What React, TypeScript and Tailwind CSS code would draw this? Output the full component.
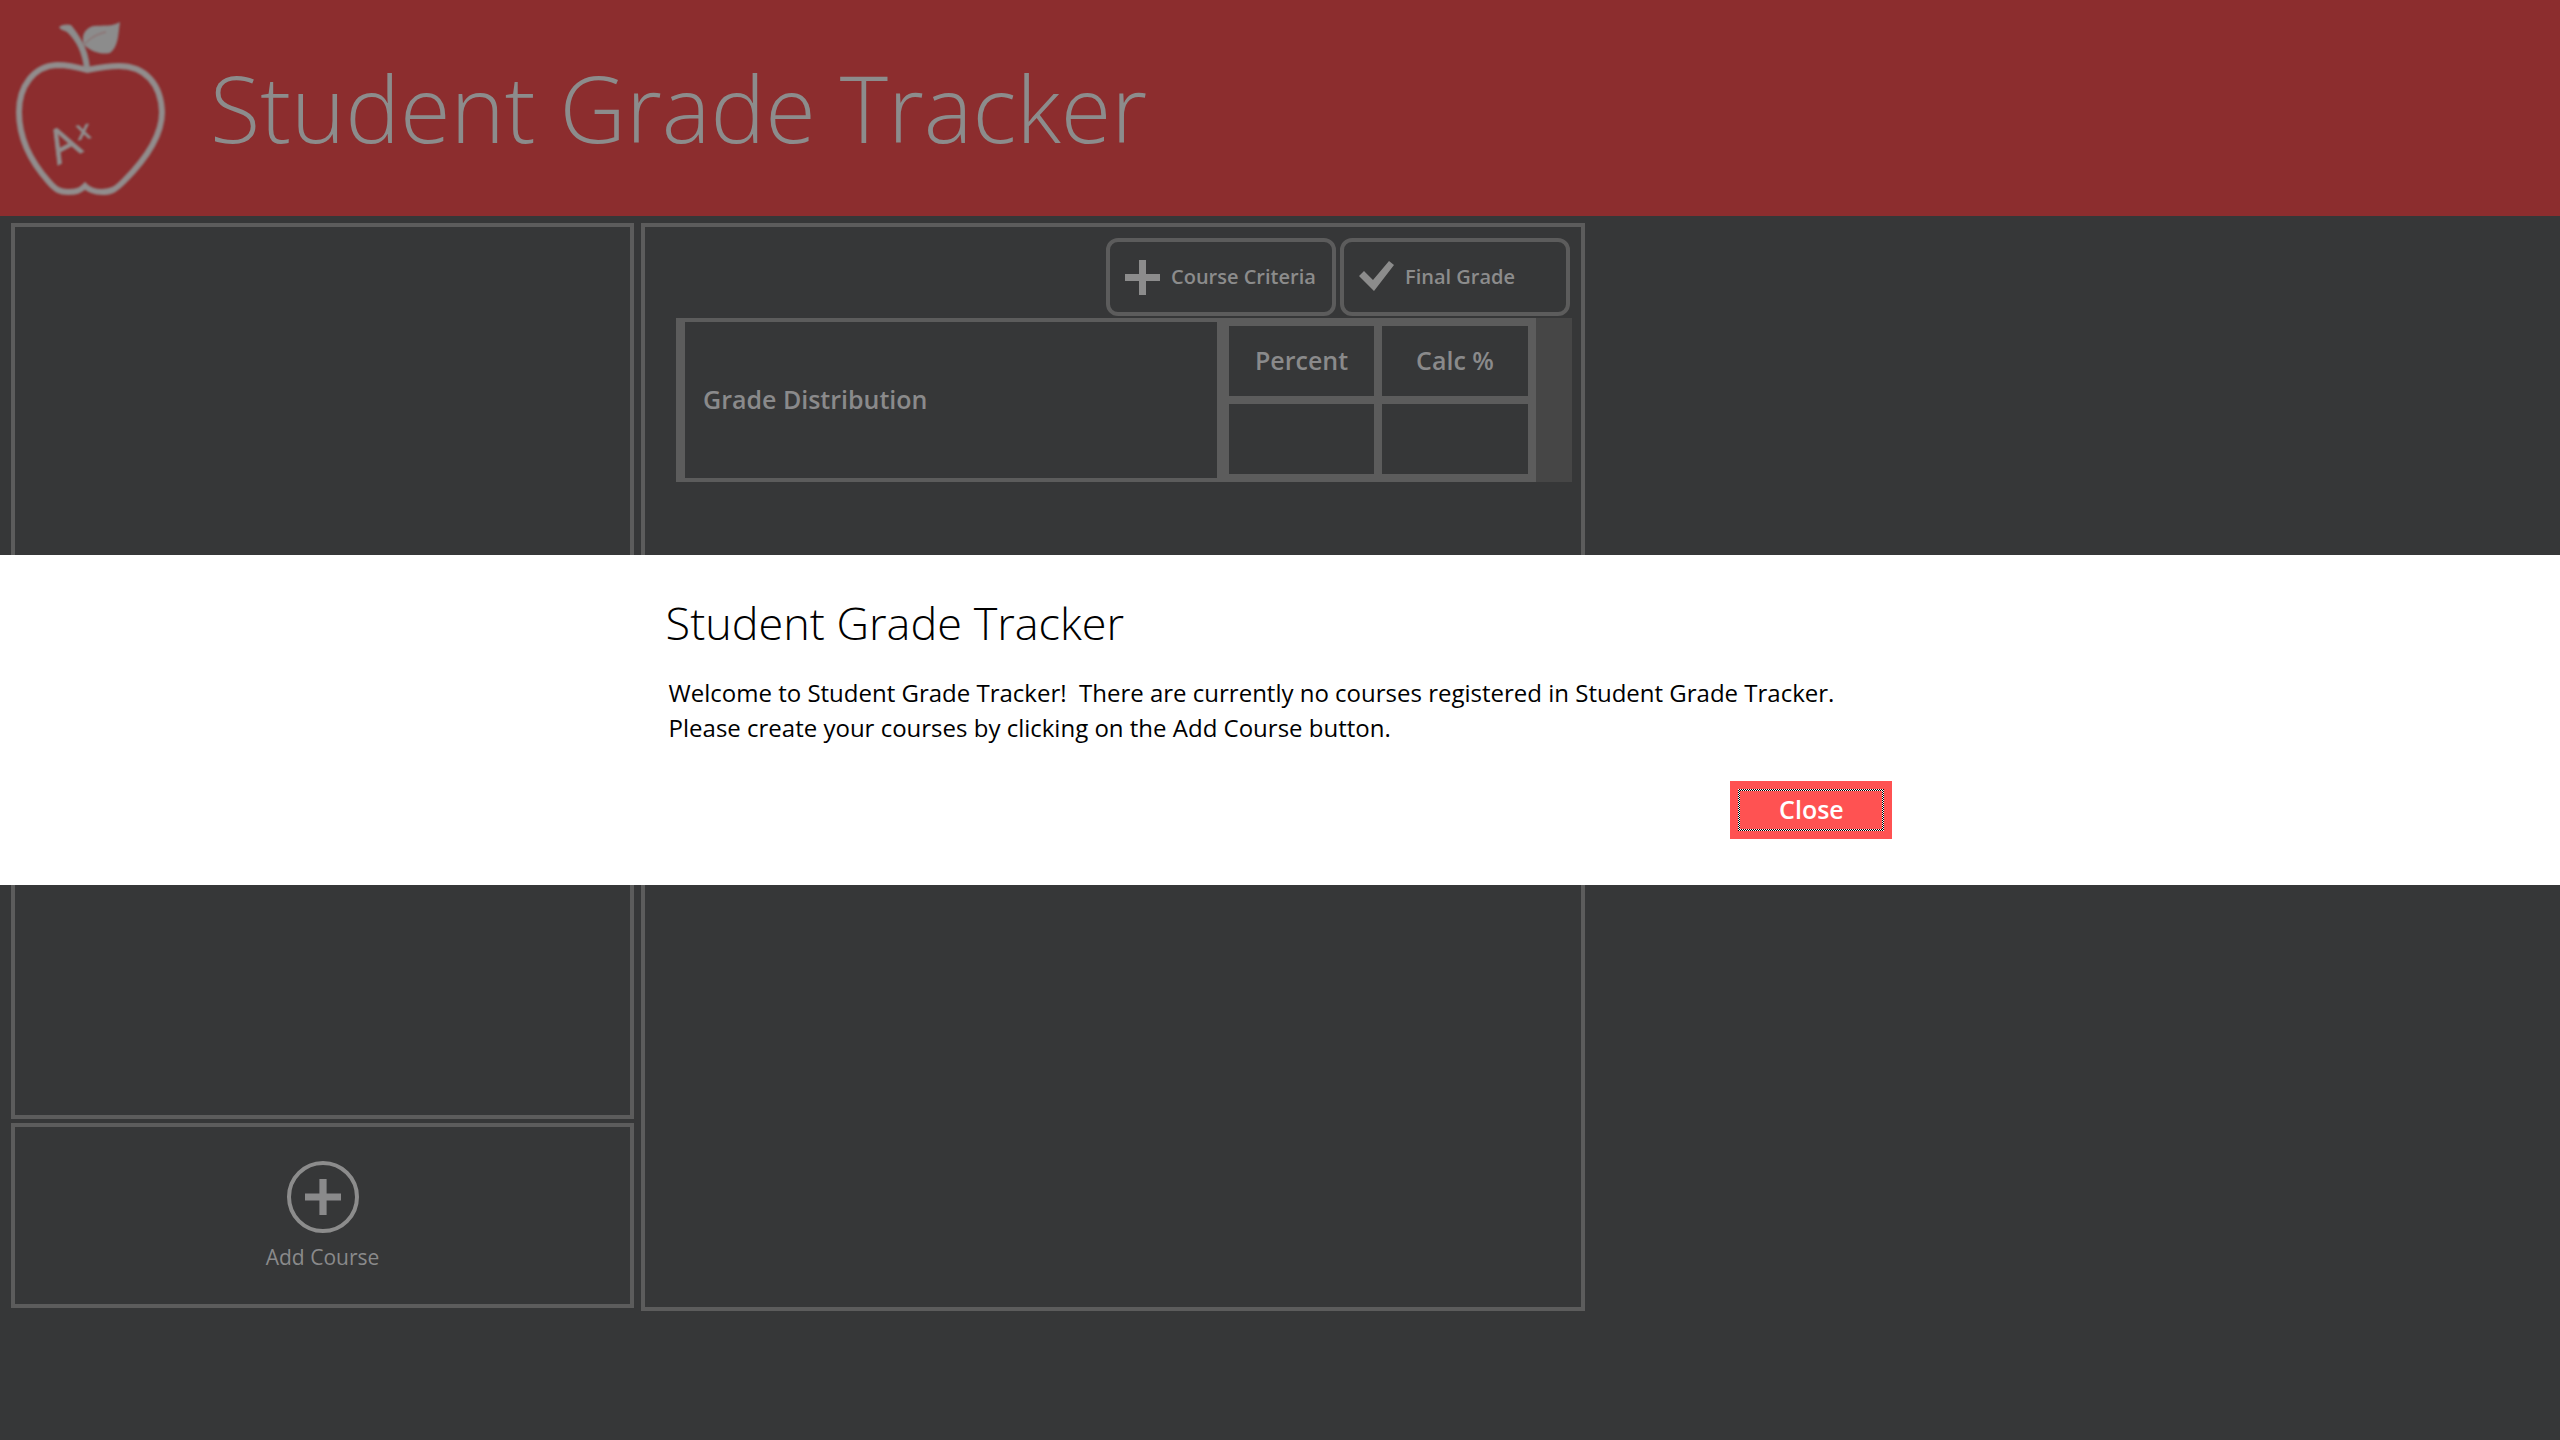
import { useState } from 'react'

interface ActionButtonProps {
  icon: React.ReactNode
  label: string
}

function PlusIcon({ className }: { className: string }) {
  return (
    <svg viewBox="0 0 35 35" className={className} fill="currentColor" aria-hidden="true">
      <path d="M14 0h7v14h14v7H21v14h-7V21H0v-7h14z" />
    </svg>
  )
}

function CheckIcon({ className }: { className: string }) {
  return (
    <svg viewBox="0 0 35 35" className={className} fill="currentColor" aria-hidden="true">
      <path d="M0 16l5-5 9 9L30 1l5 4-20 26z" />
    </svg>
  )
}

function AppleLogo() {
  return (
    <svg viewBox="0 0 180 216" className="h-[216px] w-[180px] shrink-0 blur-[1px]" aria-hidden="true">
      <path
        d="M87 70C77 67 68 65 57 65C34 66 19 86 19 112C19 140 32 163 49 182C56 190 60 192 68 192C76 192 80 191 85 186C90 191 95 192 102 192C112 192 116 189 124 181C144 161 162 137 162 112C161 84 145 66 119 66C108 66 97 68 87 70Z"
        fill="none"
        stroke="#918d8d"
        strokeWidth="6"
      />
      <path d="M59 27C62 24 68 24 71 25C79 35 88 47 90 68L84 68C82 53 77 42 68 33C65 30 61 31 59 27Z" fill="#8c8c8c" />
      <path d="M120 22C118 34 119 46 110 53C101 55 92 52 84 45C81 36 84 29 93 26C103 25 112 27 120 22Z" fill="#8c8c8c" />
      <path d="M85 44C90 38 97 34 106 32" fill="none" stroke="#8c6262" strokeWidth="1" />
      <g fill="#918d8d" stroke="#918d8d" fontFamily="'Open Sans', sans-serif">
        <text x="58" y="165" fontSize="46" strokeWidth="1" transform="rotate(-28 58 165)">
          A
        </text>
        <text x="78" y="140" fontSize="26" strokeWidth="1" transform="rotate(-10 78 140)">
          x
        </text>
      </g>
    </svg>
  )
}

function ActionButton({ icon, label }: ActionButtonProps) {
  return (
    <button className="flex h-[78px] w-[230px] items-center gap-[11px] whitespace-nowrap rounded-xl border-4 border-[#5c5c5c] pl-[15px] text-[20px] font-semibold text-[#8c8c8c]">
      {icon}
      {label}
    </button>
  )
}

function GradeTable() {
  return (
    <div className="ml-[31px] mr-[9px] mt-0.5 flex">
      <table className="grow table-fixed border-separate border-spacing-0 text-[25px] font-semibold">
        <thead>
          <tr className="h-[86px]">
            <th rowSpan={2} className="border-y-4 border-l-[9px] border-r-[12px] border-[#5c5c5c] pl-[18px] text-left font-semibold">
              Grade Distribution
            </th>
            <th className="w-[153px] border-y-8 border-r-8 border-[#5c5c5c] p-0 font-semibold">Percent</th>
            <th className="w-[154px] border-y-8 border-r-8 border-[#5c5c5c] p-0 font-semibold">Calc %</th>
          </tr>
          <tr className="h-[78px]">
            <td className="border-b-8 border-r-8 border-[#5c5c5c] p-0" />
            <td className="border-b-8 border-r-8 border-[#5c5c5c] p-0" />
          </tr>
        </thead>
      </table>
      <div className="w-9 bg-[#464646]" />
    </div>
  )
}

function WelcomeDialog({ onClose }: { onClose: () => void }) {
  return (
    <div className="fixed inset-0 flex items-center">
      <div role="dialog" aria-labelledby="dialog-title" className="flex w-full justify-center bg-white text-black">
        <div className="flex w-[48%] flex-col pb-[46px] pt-[38px]">
          <h2 id="dialog-title" className="text-[45px] font-light leading-[60px]">
            Student Grade Tracker
          </h2>
          <p className="mt-[22px] whitespace-pre-line pl-[3px] text-2xl font-normal leading-[35px]">
            Welcome to Student Grade Tracker!&nbsp; There are currently no courses registered in Student Grade Tracker.
            {'\n'}
            Please create your courses by clicking on the Add Course button.
          </p>
          <button
            onClick={onClose}
            className="mr-0.5 mt-9 flex h-[58px] w-[162px] self-end bg-[#ff5252] p-2 text-[25px] font-semibold text-white"
          >
            {/* Checkered focus frame */}
            <span className="flex h-full w-full bg-[conic-gradient(#000_25%,#fff_0_50%,#000_0_75%,#fff_0)] bg-size-[2px_2px] p-0.5">
              <span className="flex grow items-center justify-center bg-[#ff5252]">Close</span>
            </span>
          </button>
        </div>
      </div>
    </div>
  )
}

export default function App() {
  const [showWelcome, setShowWelcome] = useState(true)

  return (
    <div className="flex min-h-screen flex-col bg-[#363738] font-['Open_Sans',sans-serif] text-[#8a8a8b]">
      <header className="flex h-[216px] items-center bg-[#8c2d2e]">
        <AppleLogo />
        <h1 className="ml-[30px] whitespace-nowrap text-[92px] font-light text-[#8c8c8c]">Student Grade Tracker</h1>
      </header>

      <main className="grid grow grid-cols-[623fr_944fr_968fr] gap-[7px] pb-[129px] pl-[11px] pt-[7px]">
        <div className="flex flex-col gap-1 pb-[3px]">
          {/* Course list */}
          <section className="grow border-4 border-[#5c5c5c]" />
          <section className="flex h-[185px] justify-center border-4 border-[#5c5c5c]">
            <button
              onClick={() => setShowWelcome(false)}
              className="flex flex-col items-center pt-[34px] text-[21px] leading-8"
            >
              <span className="mb-2 flex size-[72px] items-center justify-center rounded-full border-4 border-[#8c8c8c]">
                <PlusIcon className="size-9" />
              </span>
              Add Course
            </button>
          </section>
        </div>

        {/* Course details */}
        <section className="border-4 border-[#5c5c5c]">
          <div className="mr-[11px] mt-[11px] flex justify-end gap-1">
            <ActionButton icon={<PlusIcon className="size-[35px]" />} label="Course Criteria" />
            <ActionButton icon={<CheckIcon className="size-[35px]" />} label="Final Grade" />
          </div>
          <GradeTable />
        </section>
      </main>

      {showWelcome && <WelcomeDialog onClose={() => setShowWelcome(false)} />}
    </div>
  )
}
